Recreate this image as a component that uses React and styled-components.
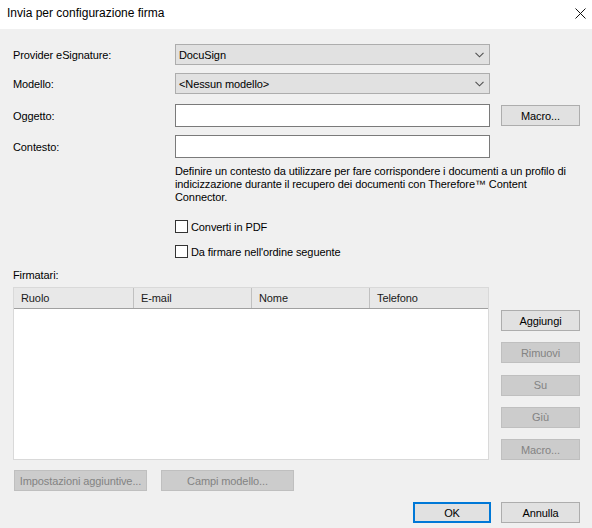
import React from 'react';
import styled, { createGlobalStyle } from 'styled-components';

const color = {
  window: '#f0f0f0',
  white: '#ffffff',
  text: '#000000',
  disabledText: '#838383',
  buttonFace: '#e1e1e1',
  buttonBorder: '#adadad',
  disabledFace: '#cccccc',
  disabledBorder: '#bfbfbf',
  inputBorder: '#7a7a7a',
  focus: '#0078d7',
};

const GlobalStyle = createGlobalStyle`
  html, body {
    margin: 0;
    padding: 0;
    background: ${color.window};
  }
  body {
    font-family: "Liberation Sans", Arial, sans-serif;
    font-size: 11px;
    letter-spacing: -0.1px;
    color: ${color.text};
  }
  * {
    box-sizing: border-box;
  }
`;

const columns = ['Ruolo', 'E-mail', 'Nome', 'Telefono'];
const sideButtons = [
  { label: 'Aggiungi', disabled: false },
  { label: 'Rimuovi', disabled: true },
  { label: 'Su', disabled: true },
  { label: 'Giù', disabled: true },
  { label: 'Macro...', disabled: true },
];

function Chevron() {
  return (
    <svg width="9" height="6" viewBox="0 0 9 6">
      <path d="M0.5 0.8 L4.5 4.8 L8.5 0.8" fill="none" stroke="#505050" strokeWidth="1.1" />
    </svg>
  );
}

function CloseIcon() {
  return (
    <svg width="11" height="11" viewBox="0 0 11 11">
      <path d="M0.5 0.5 L10.5 10.5 M10.5 0.5 L0.5 10.5" stroke="#111" strokeWidth="1" />
    </svg>
  );
}

export default function App() {
  return (
    <>
      <GlobalStyle />
      <Style.Window>
        <Style.TitleBar>
          <Style.Title>Invia per configurazione firma</Style.Title>
          <Style.Close>
            <CloseIcon />
          </Style.Close>
        </Style.TitleBar>
        <Style.Body>
          <Style.FormRow>
            <Style.Label>Provider eSignature:</Style.Label>
            <Style.Select>
              <span>DocuSign</span>
              <Chevron />
            </Style.Select>
          </Style.FormRow>
          <Style.FormRow $gap={8}>
            <Style.Label>Modello:</Style.Label>
            <Style.Select>
              <span>&lt;Nessun modello&gt;</span>
              <Chevron />
            </Style.Select>
          </Style.FormRow>
          <Style.FormRow $gap={10}>
            <Style.Label>Oggetto:</Style.Label>
            <Style.Input />
            <Style.Button>Macro...</Style.Button>
          </Style.FormRow>
          <Style.FormRow $gap={8}>
            <Style.Label>Contesto:</Style.Label>
            <Style.Input />
          </Style.FormRow>

          <Style.Indented>
            <Style.Hint>
              Definire un contesto da utilizzare per fare corrispondere i documenti a un profilo di
              <br />
              indicizzazione durante il recupero dei documenti con Therefore™ Content
              <br />
              Connector.
            </Style.Hint>
            <Style.Check $gap={16}>
              <Style.Box />
              Converti in PDF
            </Style.Check>
            <Style.Check $gap={12}>
              <Style.Box />
              Da firmare nell'ordine seguente
            </Style.Check>
          </Style.Indented>

          <Style.SectionLabel>Firmatari:</Style.SectionLabel>
          <Style.SignersRow>
            <Style.List>
              <Style.ListHeader>
                {columns.map((col) => (
                  <Style.HeaderCell key={col}>{col}</Style.HeaderCell>
                ))}
              </Style.ListHeader>
            </Style.List>
            <Style.SideButtons>
              {sideButtons.map((b) => (
                <Style.Button key={b.label} disabled={b.disabled}>
                  {b.label}
                </Style.Button>
              ))}
            </Style.SideButtons>
          </Style.SignersRow>

          <Style.ExtraRow>
            <Style.Button $width={133} disabled>
              Impostazioni aggiuntive...
            </Style.Button>
            <Style.Button $width={133} disabled>
              Campi modello...
            </Style.Button>
          </Style.ExtraRow>

          <Style.Footer>
            <Style.Button $width={78} $default>
              OK
            </Style.Button>
            <Style.Button>Annulla</Style.Button>
          </Style.Footer>
        </Style.Body>
      </Style.Window>
    </>
  );
}

const Style = {
  Window: styled.div`
    display: flex;
    flex-direction: column;
    width: 592px;
    height: 528px;
    background: ${color.window};
  `,
  TitleBar: styled.div`
    display: flex;
    justify-content: space-between;
    align-items: center;
    height: 29px;
    padding: 0 6px 3px 7px;
    background: ${color.white};
  `,
  Title: styled.div`
    font-size: 12px;
    letter-spacing: 0;
  `,
  Close: styled.div`
    display: flex;
    align-items: center;
  `,
  Body: styled.div`
    display: flex;
    flex-direction: column;
    padding: 15px 12px 0 13px;
  `,
  FormRow: styled.div`
    display: grid;
    grid-template-columns: 162px 315px 1fr;
    align-items: center;
    margin-top: ${(p) => p.$gap || 0}px;

    & > button {
      justify-self: end;
    }
  `,
  Label: styled.div`
    line-height: 14px;
  `,
  Select: styled.div`
    display: flex;
    justify-content: space-between;
    align-items: center;
    height: 21px;
    padding: 0 5px 0 3px;
    background: ${color.buttonFace};
    border: 1px solid ${color.buttonBorder};
  `,
  Input: styled.input`
    height: 23px;
    margin: 0;
    padding: 0 3px;
    background: ${color.white};
    border: 1px solid ${color.inputBorder};
    font: inherit;
    outline: none;
  `,
  Button: styled.button`
    display: flex;
    justify-content: center;
    align-items: center;
    width: ${(p) => p.$width || 79}px;
    height: 21px;
    margin: 0;
    padding: 0;
    font: inherit;
    letter-spacing: -0.1px;
    color: ${color.text};
    background: ${color.buttonFace};
    border: ${(p) => (p.$default ? `2px solid ${color.focus}` : `1px solid ${color.buttonBorder}`)};

    &:disabled {
      color: ${color.disabledText};
      background: ${color.disabledFace};
      border-color: ${color.disabledBorder};
    }
  `,
  Indented: styled.div`
    display: flex;
    flex-direction: column;
    margin-left: 162px;
  `,
  Hint: styled.p`
    margin: 7px 0 0;
    line-height: 13px;
  `,
  Check: styled.label`
    display: flex;
    align-items: center;
    gap: 3px;
    height: 13px;
    margin-top: ${(p) => p.$gap || 0}px;
  `,
  Box: styled.span`
    width: 13px;
    height: 13px;
    background: ${color.white};
    border: 1px solid #333333;
  `,
  SectionLabel: styled.div`
    margin-top: 10px;
    line-height: 14px;
  `,
  SignersRow: styled.div`
    display: flex;
    gap: 12px;
    margin-top: 5px;
    height: 173px;
  `,
  List: styled.div`
    width: 476px;
    background: ${color.white};
    border: 1px solid #d9d9d9;
  `,
  ListHeader: styled.div`
    display: grid;
    grid-template-columns: 120px 118px 118px 1fr;
    height: 21px;
    background: #e8e8e8;
    border-bottom: 1px solid #a0a0a0;
  `,
  HeaderCell: styled.div`
    display: flex;
    align-items: center;
    padding-left: 7px;
    border-right: 1px solid #c0c0c0;
    color: #1a1a1a;

    &:last-child {
      border-right: none;
    }
  `,
  SideButtons: styled.div`
    display: flex;
    flex-direction: column;
    justify-content: space-between;
    padding-top: 23px;
  `,
  ExtraRow: styled.div`
    display: flex;
    gap: 14px;
    margin: 10px 0 0 1px;
  `,
  Footer: styled.div`
    display: flex;
    justify-content: flex-end;
    gap: 10px;
    margin-top: 11px;
  `,
};
